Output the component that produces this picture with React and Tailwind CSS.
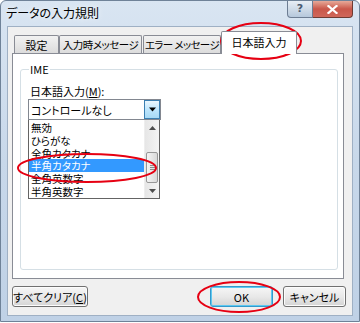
import React from "react"

const items = ["無効", "ひらがな", "全角カタカナ", "半角カタカナ", "全角英数字", "半角英数字"]

function Tab({ children, active, className }) {
  if (active) {
    return (
      <div className={`h-[23px] -mb-px relative z-10 flex items-start justify-center pt-[3px] whitespace-nowrap bg-white border border-b-0 border-[#898c95] rounded-t-[2px] ${className}`}>
        {children}
      </div>
    )
  }
  return (
    <div className={`h-[18px] flex items-center justify-center whitespace-nowrap bg-gradient-to-b from-[#f2f2f2] to-[#dcdcdc] border border-b-0 border-[#898c95] rounded-t-[2px] ${className}`}>
      {children}
    </div>
  )
}

function Btn({ children, def, className }) {
  return (
    <div className={`h-[21px] flex items-center justify-center whitespace-nowrap rounded-[3px] border bg-gradient-to-b from-[#f6f6f6] via-[#e9e9e9] to-[#d4d4d4] ${def ? "border-[#3399cc] shadow-[inset_0_0_0_1px_#5ec8f0]" : "border-[#707070] shadow-[inset_0_0_0_1px_#fcfcfc]"} ${className}`}>
      {children}
    </div>
  )
}

function Triangle({ up, className }) {
  return (
    <svg width="7" height="4" viewBox="0 0 7 4" className={className}>
      {up ? <path d="M0 4 L3.5 0 L7 4 Z" fill="#4d4d4d" /> : <path d="M0 0 L7 0 L3.5 4 Z" fill="#4d4d4d" />}
    </svg>
  )
}

export default function App() {
  return (
    <div className="relative w-[360px] h-[323px] bg-white font-['Noto_Sans_CJK_JP',sans-serif] [font-feature-settings:'palt'] text-[11px] leading-[14px] text-black">
      <div className="w-[360px] h-[322px] flex flex-col rounded-t-[6px] border border-[#6f8298] bg-gradient-to-b from-[#d9e5f2] via-[#c8d8ea] to-[#bfd1e6]">
        {/* title bar */}
        <div className="h-[25px] flex items-start">
          <div className="pl-[5px] pt-[4px] text-[12px] leading-[16px] [text-shadow:0_0_6px_#ffffff]">データの入力規則</div>
          <div className="ml-auto mr-[6px] flex">
            <div className="w-[26px] h-[17px] flex items-center justify-center rounded-bl-[4px] border border-t-0 border-[#6d7d93] bg-gradient-to-b from-[#e8eef5] via-[#cfdbe8] to-[#b6c8dc] text-[11px] font-bold text-[#4a5a70] font-['DejaVu_Sans',sans-serif]">?</div>
            <div className="w-[40px] h-[17px] flex items-center justify-center rounded-br-[4px] border border-t-0 border-l-0 border-[#6e3b33] bg-gradient-to-b from-[#e6a999] via-[#c9574a] to-[#d0675a]">
              <svg width="11" height="9" viewBox="0 0 11 9">
                <path d="M1.5 1 L9.5 8 M9.5 1 L1.5 8" stroke="#ffffff" strokeWidth="2.2" strokeLinecap="square" />
              </svg>
            </div>
          </div>
        </div>

        {/* client area */}
        <div className="mx-[6px] h-[290px] border border-[#9fb0c4] bg-[#f0f0f0] flex flex-col">
          <div className="pt-[4px] pl-[4px] pr-[8px]">
            <div className="h-[22px] flex items-end pl-[2px]">
              <Tab className="w-[45px]">設定</Tab>
              <Tab className="w-[83px] text-[10.5px] tracking-[-0.5px]">入力時メッセージ</Tab>
              <Tab className="w-[78px] ml-[1px] text-[10.5px] tracking-[-0.6px]">エラー メッセージ</Tab>
              <Tab active className="w-[76px]">日本語入力</Tab>
            </div>
            <div className="h-[226px] border border-[#898c95] bg-white pt-[8px] pl-[7px] pr-[5px]">
              <fieldset className="h-[208px] border border-[#d5dfe5] rounded-[3px] pl-[7px]">
                <legend className="ml-[1px] px-[1px] leading-[14px]">IME</legend>
                <div className="pt-[8px] pl-[2px]">
                  日本語入力(<span className="underline">M</span>):
                </div>
                <div className="mt-[1px] w-[133px] h-[21px] flex border border-[#828790] bg-white">
                  <div className="flex-1 pl-[2px] flex items-center">コントロールなし</div>
                  <div className="w-[16px] h-full flex items-center justify-center border border-[#3c7fb1] bg-gradient-to-b from-[#eaf6fd] via-[#bee6fd] to-[#a7d9f5]">
                    <svg width="7" height="5" viewBox="0 0 7 5">
                      <path d="M0 0.5 L7 0.5 L3.5 4.5 Z" fill="#000000" />
                    </svg>
                  </div>
                </div>
                <div className="w-[132px] h-[79px] flex border border-t-0 border-[#646464] bg-white overflow-hidden">
                  <div className="flex-1 flex flex-col pt-[1px] text-[10.5px]">
                    {items.map((t, i) => (
                      <div key={t} className={`h-[13px] pl-[2px] leading-[13px] overflow-hidden ${i === 3 ? "bg-[#3399ff] text-white" : ""}`}>{t}</div>
                    ))}
                  </div>
                  <div className="w-[15px] flex flex-col bg-gradient-to-r from-[#e6e6e6] to-[#f4f4f4] border-l border-[#eeeeee]">
                    <div className="h-[16px] flex items-center justify-center"><Triangle up /></div>
                    <div className="h-[16px]" />
                    <div className="h-[31px] mx-[1px] rounded-[2px] border border-[#979797] bg-gradient-to-r from-[#f4f4f4] to-[#d9d9d9] flex flex-col items-center justify-center gap-[1px]">
                      <div className="w-[5px] h-px bg-[#8a8a8a]" />
                      <div className="w-[5px] h-px bg-[#8a8a8a]" />
                      <div className="w-[5px] h-px bg-[#8a8a8a]" />
                    </div>
                    <div className="flex-1 flex items-center justify-center"><Triangle /></div>
                  </div>
                </div>
              </fieldset>
            </div>
          </div>
          <div className="mt-[7px] pl-[4px] pr-[6px] flex">
            <Btn className="w-[76px]">すべてクリア(<span className="underline">C</span>)</Btn>
            <Btn def className="ml-auto w-[63px]">OK</Btn>
            <Btn className="ml-[10px] w-[63px]">キャンセル</Btn>
          </div>
        </div>
      </div>

      {/* red highlight marks */}
      <svg className="absolute inset-0 pointer-events-none" width="360" height="323" viewBox="0 0 360 323">
        <ellipse cx="261" cy="41" rx="40" ry="18" fill="none" stroke="#e60012" strokeWidth="2" />
        <ellipse cx="87" cy="168" rx="69" ry="14" fill="none" stroke="#e60012" strokeWidth="2" />
        <ellipse cx="239" cy="297" rx="41" ry="15" fill="none" stroke="#e60012" strokeWidth="2" />
      </svg>
    </div>
  )
}
